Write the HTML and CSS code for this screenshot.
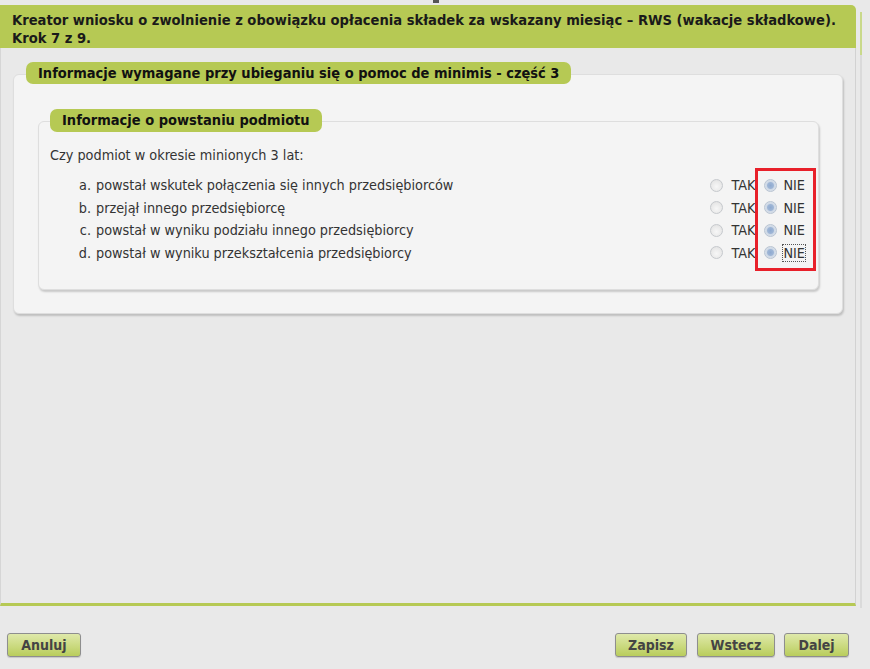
FILE: index.html
```html
<!DOCTYPE html>
<html lang="pl">
<head>
<meta charset="utf-8">
<title>Kreator wniosku RWS</title>
<link rel="stylesheet" href="styles.css">
</head>
<body>
<div class="topmark"></div>
<div class="frame">
  <div class="main">
    <div class="header">Kreator wniosku o zwolnienie z obowiązku opłacenia składek za wskazany miesiąc – RWS (wakacje składkowe).<br>Krok 7 z 9.</div>
    <div class="content">
      <section class="fs outer">
        <div class="legend">Informacje wymagane przy ubieganiu się o pomoc de minimis - część 3</div>
        <section class="fs inner">
          <div class="legend">Informacje o powstaniu podmiotu</div>
          <p class="question">Czy podmiot w okresie minionych 3 lat:</p>
          <div class="rows">
            <div class="row"><span class="mark">a.</span><span class="txt">powstał wskutek połączenia się innych przedsiębiorców</span><label class="opt tak"><input type="radio" name="a"><span>TAK</span></label><label class="opt nie"><input type="radio" name="a" checked><span>NIE</span></label></div>
            <div class="row"><span class="mark">b.</span><span class="txt">przejął innego przedsiębiorcę</span><label class="opt tak"><input type="radio" name="b"><span>TAK</span></label><label class="opt nie"><input type="radio" name="b" checked><span>NIE</span></label></div>
            <div class="row"><span class="mark">c.</span><span class="txt">powstał w wyniku podziału innego przedsiębiorcy</span><label class="opt tak"><input type="radio" name="c"><span>TAK</span></label><label class="opt nie"><input type="radio" name="c" checked><span>NIE</span></label></div>
            <div class="row"><span class="mark">d.</span><span class="txt">powstał w wyniku przekształcenia przedsiębiorcy</span><label class="opt tak"><input type="radio" name="d"><span>TAK</span></label><label class="opt nie"><input type="radio" name="d" checked><span class="focus">NIE</span></label></div>
            <div class="highlight"></div>
          </div>
        </section>
      </section>
    </div>
  </div>
  <div class="rail"></div>
</div>
<div class="buttons">
  <button class="btn btn-anuluj">Anuluj</button>
  <div class="right-btns">
    <button class="btn btn-zapisz">Zapisz</button>
    <button class="btn btn-wstecz">Wstecz</button>
    <button class="btn btn-dalej">Dalej</button>
  </div>
</div>
</body>
</html>
```

FILE: styles.css
```css
* { box-sizing: border-box; }
html, body { margin: 0; padding: 0; }
body {
  background: #e9e9e9;
  font-family: "DejaVu Sans Condensed", "DejaVu Sans", sans-serif;
  font-size: 14.3px;
  color: #333;
  width: 870px;
  height: 669px;
  overflow: hidden;
}
.topmark {
  position: absolute;
  left: 433px;
  top: 0;
  width: 6px;
  height: 3px;
  background: #555;
}
.frame {
  display: flex;
  padding-top: 5px;
}
.main {
  width: 856px;
  display: flex;
  flex-direction: column;
}
.header {
  background: #b6c954;
  border-top-right-radius: 5px;
  height: 43px;
  padding: 6px 0 0 12px;
  font-weight: bold;
  font-size: 14.6px;
  line-height: 18px;
  color: #1a1a1a;
  white-space: nowrap;
}
.content {
  height: 558px;
  border-left: 1px solid #d6d6d6;
  border-right: 1px solid #d2d2d2;
  border-bottom: 3px solid #b6c954;
  padding: 26px 12px 0 12px;
}
.rail {
  margin-left: 4px;
  margin-top: 7px;
  width: 2px;
  height: 596px;
  background: linear-gradient(#c9d98a 0, #c9d98a 43px, #dadada 43px);
}
.fs {
  background: #f4f4f4;
  border: 1px solid #dedede;
  border-radius: 6px;
  box-shadow: 1px 2px 2px rgba(0,0,0,0.18);
}
.outer {
  width: 830px;
  height: 240px;
  padding: 0 23px 0 24px;
}
.legend {
  display: block;
  width: fit-content;
  background: #b6c954;
  border-radius: 7px;
  font-weight: bold;
  font-size: 14.5px;
  color: #111;
  height: 22px;
  line-height: 22px;
  white-space: nowrap;
}
.outer > .legend {
  margin: -13px 0 0 -12px;
  padding: 0 12px;
}
.inner {
  margin-top: 37px;
  height: 169px;
  padding: 0 11px;
}
.inner > .legend {
  margin: -13px 0 0 0;
  padding: 0 12px;
  height: 23px;
  line-height: 23px;
}
.question {
  margin: 15px 0 0 0;
  line-height: 16px;
}
.rows {
  position: relative;
  margin-top: 11px;
}
.row {
  display: flex;
  align-items: center;
  height: 22.5px;
}
.mark {
  width: 46px;
  text-align: right;
  padding-right: 5px;
}
.txt { flex: 1; }
.opt {
  display: flex;
  align-items: center;
  color: #333;
}
.opt input {
  appearance: none;
  -webkit-appearance: none;
  flex: none;
  width: 13px;
  height: 13px;
  margin: 0;
  border-radius: 50%;
  border: 1px solid #c6c9cd;
  background: radial-gradient(circle at 50% 60%, #f7f7f7 0, #e9e9e9 60%, #dcdcdc 100%);
}
.opt input:checked {
  border-color: #b9c4d2;
  background: radial-gradient(circle, #8faad0 0, #9fb6d6 3px, #cfd9e6 4px, #e4e9f0 100%);
}
.tak input { margin-right: 8px; }
.nie { margin-left: 9px; margin-right: 2px; }
.nie input { margin-right: 6px; }
.focus {
  outline: 1px dotted #555;
  outline-offset: 0;
}
.highlight {
  position: absolute;
  right: -9px;
  top: -6px;
  width: 61px;
  height: 103px;
  border: 3px solid #e8202a;
}
.buttons {
  display: flex;
  justify-content: space-between;
  padding: 25px 21px 0 7px;
}
.right-btns {
  display: flex;
  gap: 9px;
}
.btn {
  height: 24px;
  border: 1px solid #8e8e8e;
  border-radius: 3px;
  background: linear-gradient(#dfe9aa, #b9cd5c);
  font-family: "DejaVu Sans Condensed", "DejaVu Sans", sans-serif;
  font-weight: bold;
  font-size: 14px;
  color: #444;
  padding: 0;
  box-shadow: 0 1px 1px rgba(0,0,0,0.15);
}
.btn-anuluj { width: 74px; }
.btn-zapisz { width: 72px; }
.btn-wstecz { width: 78px; margin-left: 1px; }
.btn-dalej { width: 65px; }
```
